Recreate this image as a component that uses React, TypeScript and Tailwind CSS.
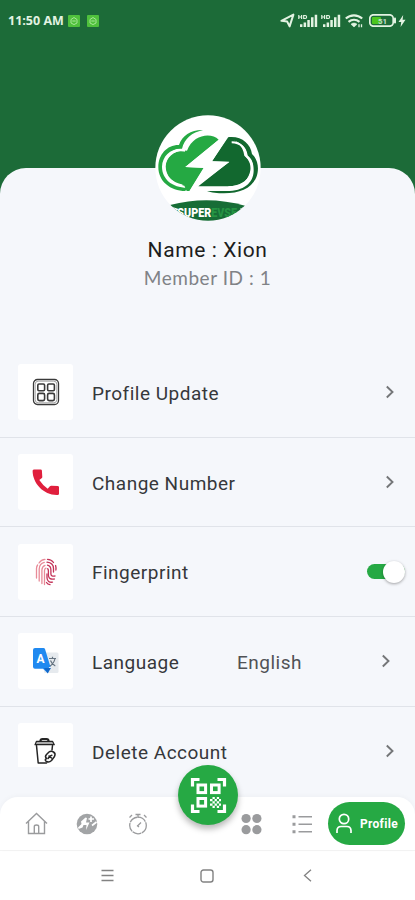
import { useState } from 'react';
import type { ReactNode } from 'react';

function StatusBar() {
  return (
    <div className="flex h-[41px] items-center justify-between pl-2 pr-[9px] text-[#e3f3e2]">
      <div className="flex items-center">
        <span className="w-[60px] whitespace-nowrap font-['Open_Sans',sans-serif] text-[12.5px] font-bold leading-4">
          11:50 AM
        </span>
        <AppBadge />
        <span className="w-[7px]" />
        <AppBadge />
      </div>
      <div className="flex items-center">
        <svg width="15" height="15" viewBox="0 0 15 15" fill="none" stroke="currentColor" strokeWidth="2" strokeLinejoin="round">
          <path d="M1.4 7.8 13.4 1.6 9.6 13.4 7.2 8.6Z" />
        </svg>
        <span className="w-[3px]" />
        <Signal />
        <span className="w-[3px]" />
        <Signal />
        <svg className="ml-[4px]" width="19" height="14" viewBox="0 0 19 14" fill="none" stroke="currentColor" strokeWidth="2.1">
          <path d="M.8 4.6C5.500 .3 12.500 .3 17.200 4.600" />
          <path d="M3.500 7.900C6.800 5.100 11.200 5.100 14.500 7.900" />
          <path d="M6 10.200C7.800 8.700 10.200 8.700 12 10.200L9 13Z" fill="currentColor" strokeWidth=".6" />
          <path d="M14 10.300v3M16.500 10.300v3" strokeWidth="1.300" />
        </svg>
        <svg className="ml-[5px]" width="27" height="13" viewBox="0 0 27 13">
          <rect x=".8" y=".8" width="23.400" height="11.400" rx="3.600" fill="none" stroke="currentColor" strokeWidth="1.700" />
          <rect x="3" y="3" width="9" height="7" rx="1" fill="#4cc61e" />
          <rect x="25" y="3.500" width="2" height="6" rx=".9" fill="currentColor" />
          <text x="13.500" y="9.600" textAnchor="middle" fill="#c3dfcb" className="font-['Roboto',sans-serif] text-[8px] font-bold">
            51
          </text>
        </svg>
        <svg className="ml-[2px]" width="8" height="12" viewBox="0 0 8 12" fill="currentColor">
          <path d="M5.200 0 .5 7h2.700L2.600 12 7.500 4.800H4.600Z" />
        </svg>
      </div>
    </div>
  );
}

function AppBadge() {
  return (
    <svg width="12" height="12" viewBox="0 0 12 12">
      <rect width="12" height="12" rx="1" fill="#4fc13c" />
      <path d="M3 4.500 6 2.500 9 4.500V8L6 9.600 3 8ZM4.300 6h3.400" fill="none" stroke="#a5e596" strokeWidth="1" />
    </svg>
  );
}

function Signal() {
  return (
    <svg width="20" height="14" viewBox="0 0 20 14" fill="currentColor">
      <path d="M.8 1v4M3.600 1v4M1 3h2.600M5.700 1.500h1.500q1.400 0 1.400 1.500T7.200 4.500H5.700Z" fill="none" stroke="currentColor" strokeWidth="1.200" />
      <path d="M2 10.300h2.400V13H2zM5.600 8.500h2.500V13H5.600zM9.300 6h2.500V13H9.300zM13 3.300h2.500V13H13zM16.700 .8h2.500V13h-2.500z" />
    </svg>
  );
}

function Logo() {
  return (
    <svg className="block h-[106px] w-[106px]" viewBox="30 30 318 318">
      <defs>
        <clipPath id="disc">
          <circle cx="189" cy="189" r="158" />
        </clipPath>
      </defs>
      <circle cx="189" cy="189" r="158" fill="#fff" />
      <g clipPath="url(#disc)">
        {/* left half of the cloud */}
        <path d="M221 104C198 82 145 88 126 137C90 133 63 156 62 184C62 214 85 238 118 242L125 258H134L177 189L121 186Z" fill="#25a943" />
        <path d="M174 75C139 74 111 91 102 120C67 119 40 148 40 186C40 229 76 258 121 258L126 248C82 248 51 222 51 185C52 153 77 129 111 131C119 100 140 83 174 75Z" fill="#25a943" />
        <path d="M112 242C80 237 57 214 57 185C58 155 84 131 117 136C124 117 134 106 147 99" fill="none" stroke="#fff" strokeWidth="7" />
        {/* right half of the cloud */}
        <path d="M248 97C287 91 317 115 321 147C340 164 343 194 334 217C319 252 283 265 237 265C218 265 198 263 186 258H245C296 258 325 234 326 197C326 176 321 162 307 151C302 122 279 103 247 106Z" fill="#12682f" />
        <path d="M246 99C273 103 294 121 298 152C314 165 321 184 314 205C305 233 284 244 252 244H160L253 170L201 169Z" fill="#12682f" />
        <path d="M260 112C286 112 303 130 305 154C322 168 325 190 317 209C307 233 286 245 250 247" fill="none" stroke="#fff" strokeWidth="6" />
        <path d="M223 103L121 186L176 188L130 263L253 171L201 169L250 96Z" fill="#fff" />
        {/* banner */}
        <path d="M75 300Q188 270 300 302Q285 350 188 352Q92 346 75 300Z" fill="#176d36" />
        <path d="M73 303L101 312L92 320L113 331L99 338Z" fill="#fff" />
        <path d="M302 303L284 312L293 318L276 327L283 336Z" fill="#fff" />
        <text
          x="97"
          y="336"
          textLength="179"
          lengthAdjust="spacingAndGlyphs"
          fill="#fff"
          className="font-['Roboto',sans-serif] text-[39px] font-black"
        >SUPER<tspan fill="#259443">EVSE</tspan></text>
      </g>
    </svg>
  );
}

function ProfileUpdateIcon() {
  return (
    <svg width="28" height="28" viewBox="0 0 28 28" fill="none" stroke="#3a3a3a" strokeWidth="1.300">
      <rect x="1.500" y="1.500" width="25" height="25" rx="4" />
      <rect x="3.200" y="3.200" width="21.600" height="21.600" rx="3" stroke="#a5a5a5" strokeWidth="1" />
      <rect x="5.800" y="6" width="6.800" height="6.800" rx="1.200" strokeWidth="1.600" />
      <rect x="15.600" y="6" width="6.800" height="6.800" rx="1.200" strokeWidth="1.600" />
      <rect x="5.800" y="15.400" width="6.800" height="7.200" rx="1.500" strokeWidth="1.600" />
      <rect x="15.600" y="15.400" width="6.800" height="7.200" rx="1.500" strokeWidth="1.600" />
    </svg>
  );
}

function PhoneIcon() {
  return (
    <svg width="28" height="28" viewBox="0 0 28 28" fill="#e01f3d">
      <path d="M1.800 1.400H8.800Q9.700 1.500 9.900 2.500L10.300 9Q10.300 9.800 9.600 10.300L7.300 12Q10.800 17.300 15.700 20.800L17.900 18.200Q18.500 17.600 19.400 17.700L26 18Q27 18.200 27 19.200V25.700Q26.900 26.900 25.700 26.900C12 27.500 .6 15.500 .6 2.700Q.7 1.500 1.800 1.400Z" />
    </svg>
  );
}

function FingerprintIcon() {
  return (
    <svg width="22" height="28" viewBox="0 0 22 28" fill="none" strokeWidth="1.300" strokeLinecap="round">
      <g stroke="#e88b98">
        <path d="M4 5Q6.300 1.600 10 1.400" />
        <path d="M1.500 20V10.500Q1.500 8.500 2.600 7" />
        <path d="M4.200 23V11Q4.400 5.700 9.300 4.400" />
        <path d="M6.900 25.500V12Q7 8.300 10 7.300" />
        <path d="M9.500 26.500V12.500Q9.600 10.700 11 10.200" />
      </g>
      <g stroke="#c33358">
        <path d="M12.500 1.400Q16.500 1.600 18.500 4.500" />
        <path d="M12 4.200Q18.300 4.700 18.500 10.500V14" />
        <path d="M12.500 7.200Q15.900 8 15.900 12V16Q16 18.800 20 18" />
        <path d="M12.700 10.800Q13.400 11.500 13.400 13V17.500Q14 22 19.300 21" />
        <path d="M12 16V20Q12.500 24.800 17.500 24.200" />
        <path d="M11.500 24.500Q12.500 26.300 15 26.600" />
        <path d="M20.600 7.500Q21.200 9.500 20.900 12" />
      </g>
    </svg>
  );
}

function TranslateIcon() {
  return (
    <svg width="28" height="28" viewBox="0 0 28 28">
      <rect x="12" y="5.500" width="14.500" height="20.500" rx="1.500" fill="#e6eaee" />
      <path d="M17 11.500H24M20.500 9.700V11.500M23 11.500Q22 16.500 17.500 19.500M18.500 13.500Q20 17.500 23.300 19" fill="none" stroke="#657380" strokeWidth="1.200" />
      <path d="M3 1H11.500Q12.600 1 13 2L18.500 20H17L16 26.500 11 21.700H3Q1 21.700 1 19.700V3Q1 1 3 1Z" fill="#2089f0" />
      <path d="M12 21H19L15.700 26.300Z" fill="#1267c8" />
      <text x="8.500" y="16" textAnchor="middle" fill="#fff" className="font-['Roboto',sans-serif] text-[12px] font-bold">
        A
      </text>
    </svg>
  );
}

function TrashIcon() {
  return (
    <svg width="28" height="28" viewBox="0 0 28 28" fill="none" stroke="#252525" strokeWidth="1.500" strokeLinecap="round" strokeLinejoin="round">
      <path d="M8.500 4Q8.500 2 10.500 2H14.500Q16.500 2 16.500 4" strokeWidth="2.200" />
      <path d="M4.500 4.300H20.500L22.300 7.700H3Z" fill="#aaa" strokeWidth="1.200" />
      <path d="M4.500 8.500 6.200 26H14.500M20.500 8.500 20 13" />
      <path d="M14.500 21.500Q12.500 19.500 14.500 17.500L17 15Q19 13.500 21.500 15T22.500 19.500L19.500 23.500Q17 26 14.500 24.500T14.500 21.500Z" />
      <path d="M16 21.500Q18 18.500 19.800 18.300M17 19 19.500 21" strokeWidth="1.600" />
    </svg>
  );
}

function Chevron() {
  return (
    <svg width="10" height="14" viewBox="0 0 10 14" fill="none" stroke="#747678" strokeWidth="1.900">
      <path d="M1.800 1.500 7.500 7 1.800 12.500" />
    </svg>
  );
}

function Row({ icon, label, labelClass, children }: { icon: ReactNode; label: string; labelClass: string; children: ReactNode }) {
  return (
    <div className="flex h-[89.700px] shrink-0 items-center border-b border-[#e0e3e9] pl-[18px] text-[#36383b]">
      <div className="flex h-[56px] w-[55px] shrink-0 items-center justify-center rounded-[3px] bg-white">{icon}</div>
      <span className={`ml-[19px] whitespace-nowrap pt-[3px] text-[19px] leading-6 ${labelClass}`}>{label}</span>
      {children}
    </div>
  );
}

function BottomBar() {
  return (
    <div className="relative flex h-[53px] shrink-0 items-center rounded-t-[18px] bg-white pl-[25px] pr-[10px] text-[#9a9b9d] shadow-[0_-1px_5px_rgba(0,0,0,0.03)]">
      <svg width="23" height="23" viewBox="0 0 23 23" fill="none" stroke="currentColor" strokeWidth="1.400">
        <path d="M1 11.500 11.500 1.500 22 11.500M3.500 9.500V21.500H19.500V9.500M9.300 21.500V14.500Q9.300 13 11.500 13T13.700 14.500V21.500" />
      </svg>
      <svg className="ml-[28px]" width="22" height="22" viewBox="0 0 22 22">
        <circle cx="11" cy="11" r="10.300" fill="#a2a4a6" />
        <path d="M2 14.500 5.500 11 5 8.500 9.500 4.500 11 5 10 9.500H13.500L10 17 10.500 12H7.500L6.500 14.500 2.600 16Z" fill="#fff" />
        <path d="M15 3.500V9M12.500 6H18M16 12.500 20.500 9" fill="none" stroke="#fff" strokeWidth="1.700" />
      </svg>
      <svg className="ml-[30px]" width="20" height="22" viewBox="0 0 20 22" fill="none" stroke="currentColor" strokeWidth="1.300">
        <circle cx="10" cy="12.500" r="8.300" strokeDasharray="9 .7" />
        <path d="M7.500 1.500H12.500M10 1.500V5M1.500 4.500 4 2M18.500 4.500 16 2M9.500 13 13 9.500M9 12.500 11 14" />
      </svg>
      <svg className="ml-[93px]" width="21" height="22" viewBox="0 0 21 22" fill="currentColor">
        <circle cx="5.100" cy="5.500" r="4.600" />
        <circle cx="15.900" cy="5.500" r="4.600" />
        <circle cx="5.100" cy="16.700" r="4.600" />
        <circle cx="15.900" cy="16.700" r="4.600" />
      </svg>
      <svg className="ml-[30px]" width="21" height="20" viewBox="0 0 21 20" fill="none" stroke="currentColor" strokeWidth="1.500">
        <path d="M6.500 2.700H20M6.500 10.200H20M6.500 17.700H20" />
        <path d="M.5 2.700H3.500M.5 10.200H3.500M.5 17.700H3.500" strokeWidth="2.900" />
      </svg>
      <div className="ml-auto flex h-[43px] w-[77px] items-center rounded-full bg-[#26a944] pl-[7px] text-white">
        <svg width="18" height="21" viewBox="0 0 18 21" fill="none" stroke="currentColor" strokeWidth="1.700">
          <circle cx="9" cy="6" r="4.700" />
          <path d="M2 20V17.500Q2.200 13.500 6 13.500H12Q15.800 13.500 16 17.500V20" />
        </svg>
        <span className="ml-[7px] text-[12px] font-bold leading-4 tracking-[0.300px]">Profile</span>
      </div>

      {/* scan button sits over the bar's top edge */}
      <div className="absolute -top-[32px] left-[178px] flex h-[60px] w-[60px] items-center justify-center rounded-full bg-[#26a944] shadow-[0_4px_6px_rgba(0,0,0,0.28)]">
        <svg width="37" height="37" viewBox="0 0 37 37" fill="none" stroke="#fff" strokeWidth="3">
          <path d="M2.500 9.500V2.500H9.500M27.500 2.500H34.500V9.500M34.500 27.500V34.500H27.500M9.500 34.500H2.500V27.500" strokeWidth="3.200" />
          <rect x="8" y="8" width="7.600" height="7.600" strokeWidth="3" />
          <rect x="21.500" y="8" width="7.600" height="7.600" strokeWidth="3" />
          <rect x="8" y="21.500" width="7.600" height="7.600" strokeWidth="3" />
          <path d="M22.500 21h2.300M26.800 21h2.300M20 23.200h2.500M24.600 23.200h2.300M29 23.200h2M22.500 25.400h2.300M26.800 25.400h2.300M20 27.600h2.500M24.600 27.600h2.300M29 27.600h2M22.500 29.800h2.300M26.800 29.800h2.300" strokeWidth="2.200" />
        </svg>
      </div>
    </div>
  );
}

export default function App() {
  const [fingerprint, setFingerprint] = useState(true);

  return (
    <div className="flex h-[900px] w-[415px] flex-col overflow-hidden bg-[#f5f7fb] font-['Roboto',sans-serif]">
      <header className="h-[196px] shrink-0 bg-[#1c6b38]">
        <StatusBar />
      </header>

      <main className="-mt-[28px] flex h-[629px] shrink-0 flex-col rounded-t-[26px] bg-[#f5f7fb]">
        <div className="-mt-[53px] flex h-[233px] shrink-0 flex-col items-center">
          <Logo />
          <p className="mt-[16px] text-[21px] leading-[26px] tracking-[0.600px] text-[#1c1d20]">Name : Xion</p>
          <p className="mt-[2px] font-['Lato',sans-serif] text-[19px] font-normal leading-[26px] tracking-[0.550px] text-[#808286]">
            Member ID : 1
          </p>
        </div>

        {/* list stops short of the bar, so the last row is cut */}
        <div className="flex h-[419px] shrink-0 flex-col overflow-hidden">
          <Row icon={<ProfileUpdateIcon />} label="Profile Update" labelClass="tracking-[0.500px]">
            <span className="ml-auto mr-[20px]"><Chevron /></span>
          </Row>
          <Row icon={<PhoneIcon />} label="Change Number" labelClass="tracking-[0.500px]">
            <span className="ml-auto mr-[20px]"><Chevron /></span>
          </Row>
          <Row icon={<FingerprintIcon />} label="Fingerprint" labelClass="tracking-[0.500px]">
            <button
              type="button"
              onClick={() => setFingerprint(!fingerprint)}
              className={`ml-auto mr-[10px] flex h-[15px] w-[38px] items-center rounded-full ${fingerprint ? 'justify-end bg-[#26a944]' : 'bg-gray-300'}`}
            >
              <span className="h-[22px] w-[22px] rounded-full bg-white shadow-[0_1px_3px_rgba(0,0,0,0.35)]" />
            </button>
          </Row>
          <Row icon={<TranslateIcon />} label="Language" labelClass="w-[145px] tracking-[0.500px]">
            <span className="pt-[3px] text-[19px] leading-6 tracking-[0.500px] text-[#505256]">English</span>
            <span className="ml-auto mr-[24px]"><Chevron /></span>
          </Row>
          <Row icon={<TrashIcon />} label="Delete Account" labelClass="tracking-[0.500px]">
            <span className="ml-auto mr-[20px]"><Chevron /></span>
          </Row>
        </div>
      </main>

      <BottomBar />

      <div className="flex h-[50px] shrink-0 items-center border-t border-[#f4f4f4] bg-white pl-[101px] text-[#828282]">
        <svg width="13" height="13" viewBox="0 0 13 13" fill="none" stroke="currentColor" strokeWidth="1.300">
          <path d="M.5 1.500H12.500M.5 6.500H12.500M.5 11.500H12.500" />
        </svg>
        <svg className="ml-[86px]" width="14" height="14" viewBox="0 0 14 14" fill="none" stroke="currentColor" strokeWidth="1.400">
          <rect x="1" y="1" width="12" height="12" rx="2.500" />
        </svg>
        <svg className="ml-[89px]" width="9" height="13" viewBox="0 0 9 13" fill="none" stroke="currentColor" strokeWidth="1.300">
          <path d="M8 .8 1.500 6.500 8 12.200" />
        </svg>
      </div>
    </div>
  );
}
